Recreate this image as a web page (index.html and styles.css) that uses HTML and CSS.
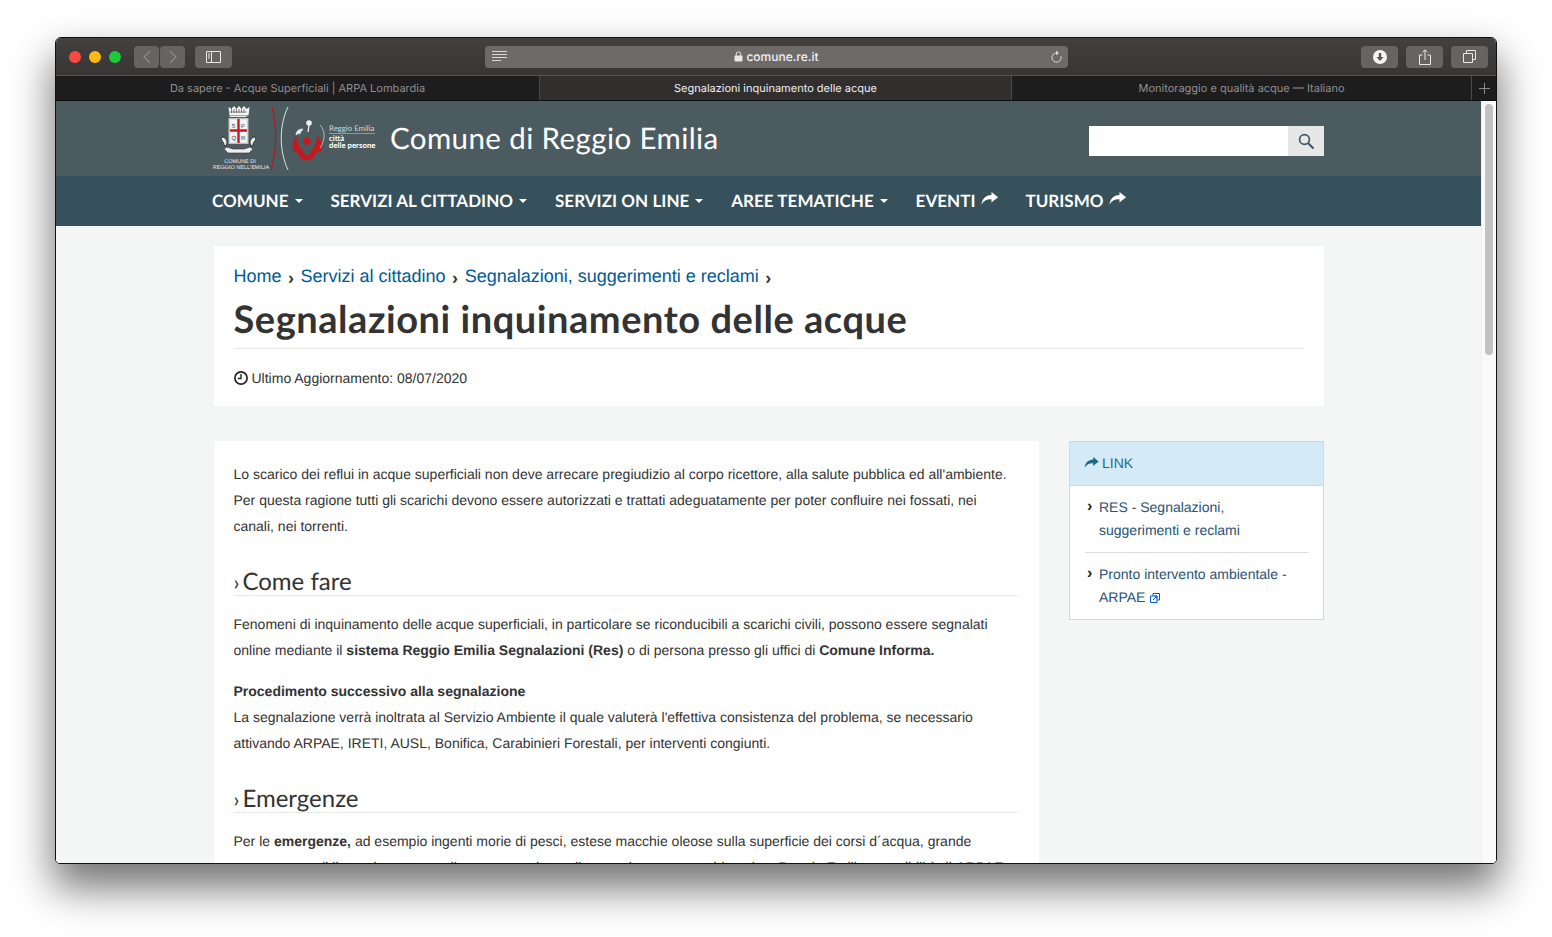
FILE: index.html
```html
<!doctype html>
<html lang="it">
  <head>
    <meta charset="UTF-8" />
    <title>Segnalazioni inquinamento delle acque</title>
    <link rel="stylesheet" href="styles.css">
  </head>
  <body>
    <div class="window">
      <div class="toolbar">
        <div class="lights">
          <span class="light red"></span>
          <span class="light yellow"></span>
          <span class="light green"></span>
        </div>
        <div class="nav-btns">
          <span class="tool-btn arrow-btn">
            <svg width="10" height="14" viewBox="0 0 10 14"><path d="M8 1 2 7l6 6" fill="none" stroke="#8e8e8d" stroke-width="1.2"/></svg>
          </span>
          <span class="tool-btn arrow-btn">
            <svg width="10" height="14" viewBox="0 0 10 14"><path d="M2 1l6 6-6 6" fill="none" stroke="#8e8e8d" stroke-width="1.2"/></svg>
          </span>
        </div>
        <span class="tool-btn wide-btn sidebar-btn">
          <svg width="15" height="12" viewBox="0 0 15 12"><path d="M.5.5h14v11H.5zM5.5.5v11" fill="none" stroke="#e8e8e8"/><path d="M2 3h2M2 5h2M2 7h2" stroke="#e8e8e8"/></svg>
        </span>
        <div class="urlbar">
          <svg class="reader" width="15" height="11" viewBox="0 0 15 11"><path d="M0 .5h15M0 3.5h15M0 6.5h15M0 9.5h9" stroke="#d8d8d8"/></svg>
          <span class="url">
            <svg width="9" height="11" viewBox="0 0 9 11"><path d="M2.2 5V3.2a2.3 2.3 0 0 1 4.6 0V5" fill="none" stroke="#e8e8e8"/><rect x=".5" y="4.6" width="8" height="6" rx="1" fill="#e8e8e8"/></svg>
            comune.re.it
          </span>
          <svg class="reload" width="12" height="14" viewBox="0 0 12 14"><path d="M6.5 3a4.6 4.6 0 1 0 4.4 3.2" fill="none" stroke="#d8d8d8"/><path d="M6 .6 9 3 6 5.2z" fill="#d8d8d8"/></svg>
        </div>
        <div class="actions">
          <span class="tool-btn wide-btn">
            <svg width="14" height="14" viewBox="0 0 14 14"><circle cx="7" cy="7" r="7" fill="#f4f4f4"/><path d="M5.8 3h2.4v4H10.500L7 11 3.500 7h2.300z" fill="#555"/></svg>
          </span>
          <span class="tool-btn wide-btn">
            <svg width="12" height="16" viewBox="0 0 12 16"><path d="M3.500 6H.5v9.500h11V6H8.500M6 11V1M3.500 3.300 6 .8l2.500 2.500" fill="none" stroke="#e8e8e8"/></svg>
          </span>
          <span class="tool-btn wide-btn">
            <svg width="13" height="13" viewBox="0 0 13 13"><path d="M.5 3.500h9v9h-9zM3.500 3.500V.5h9v9h-3" fill="none" stroke="#e8e8e8"/></svg>
          </span>
        </div>
      </div>

      <div class="tabs">
        <div class="tab tab-first">Da sapere - Acque Superficiali | ARPA Lombardia</div>
        <div class="tab tab-active">Segnalazioni inquinamento delle acque</div>
        <div class="tab tab-last">Monitoraggio e qualità acque — Italiano</div>
        <div class="tab-plus">
          <svg width="11" height="11" viewBox="0 0 11 11"><path d="M5.500 0v11M0 5.500h11" stroke="#8b8b8b"/></svg>
        </div>
      </div>

      <div class="viewport">
        <div class="page">
          <header class="site-head">
            <div class="container head-row">
              <svg class="logo" width="165" height="68" viewBox="0 0 165 68">
                <path d="M15.500 2l3 2 2.500-3 2.500 3 2.500-3 2.500 3 2.500-3 2.500 3 3-2-1 8.500H16.500z" fill="#f4f4f4"/>
                <path d="M16.500 7h17M18.500 4v4M21 4v4M23.500 4v4M26 4v4M28.500 4v4M31 4v4" stroke="#555" stroke-width=".7"/>
                <path d="M16.500 11.500h17" stroke="#eee"/>
                <rect x="16" y="13.500" width="19" height="25" fill="#e4e6e6" stroke="#b9bdbe"/>
                <rect x="17.500" y="15" width="16" height="22" fill="#f5f5f5"/>
                <path d="M25.500 14v24M17 25.500h17" stroke="#c41a22" stroke-width="2.400"/>
                <text x="18.500" y="22.500" class="spqr">S</text>
                <text x="28" y="22.500" class="spqr">P</text>
                <text x="18.500" y="34.500" class="spqr">Q</text>
                <text x="28" y="34.500" class="spqr">R</text>
                <path d="M11 40c0-4-4-4-2-8 3 0 5 3 5 6l-1 3zM40 40c0-4 4-4 2-8-3 0-5 3-5 6l1 3z" fill="#eee" stroke="#222" stroke-width=".8"/>
                <path d="M11 44l4 4h21l4-4-3-2-6 2H20l-6-2z" fill="#eee" stroke="#333" stroke-width=".6"/>
                <text x="27" y="57.500" class="crest-txt" text-anchor="middle">COMUNE DI</text>
                <text x="28" y="64" class="crest-txt" text-anchor="middle">REGGIO NELL'EMILIA</text>
                <path d="M59 2c5 20 5 42-1 63" fill="none" stroke="#b3191f" stroke-width="1.200"/>
                <path d="M75 2c-9 18-9 44 0 63" fill="none" stroke="#dfe3e3" stroke-width="1"/>
                <circle cx="94" cy="36" r="3.800" fill="#c21a20"/>
                <path d="M83 33c-3 4-3 9-2 13 3 0 5 2 6 4l3-3c-3-3-6-8-7-14zM105 32c3 4 4 9 2 14-3 0-5 2-6 4l-3-3c3-3 6-9 7-15zM87 48l7 3 7-3-1 5-6 2-6-2z" fill="#c21a20" stroke="#c21a20" stroke-width="1.500"/>
                <circle cx="96" cy="18" r="2.800" fill="#f0f0f0"/>
                <path d="M96 20l-1 7" stroke="#f0f0f0" stroke-width="1.300"/>
                <path d="M83 30c0-4 3-6 7-6-1 2-3 3-3 5-1-1-3 0-4 1z" fill="#f0f0f0" stroke="#f0f0f0" stroke-width=".6"/>
                <path d="M107 20c5 5 6 14 0 23" fill="none" stroke="#d9dddd" stroke-width=".7"/>
                <text x="116" y="25.500" class="logo-small">Reggio Emilia</text>
                <path d="M116 28.500h46" stroke="#aeb6b8" stroke-width=".7"/>
                <text x="116" y="35.500" class="logo-small logo-strong">città</text>
                <text x="116" y="43" class="logo-small logo-strong">delle persone</text>
              </svg>
              <div class="site-title">Comune di Reggio Emilia</div>
              <form class="search">
                <span class="search-input"></span>
                <span class="search-btn">
                  <svg width="17" height="17" viewBox="0 0 17 17"><circle cx="6.500" cy="6.500" r="4.900" fill="none" stroke="#3f5a66" stroke-width="1.700"/><path d="M10.200 10.200 15.500 15.500" stroke="#3f5a66" stroke-width="2.200"/></svg>
                </span>
              </form>
            </div>
          </header>

          <nav class="site-nav">
            <div class="nav-row">
              <a class="nav-item">COMUNE <i class="caret"></i></a>
              <a class="nav-item">SERVIZI AL CITTADINO <i class="caret"></i></a>
              <a class="nav-item">SERVIZI ON LINE <i class="caret"></i></a>
              <a class="nav-item">AREE TEMATICHE <i class="caret"></i></a>
              <a class="nav-item">EVENTI
                <svg class="share" width="17" height="13" viewBox="0 0 17 13"><path d="M10.500 0 17 5.200l-6.500 5.300V7.300C6 7 3 8.500 .5 12.500 1 7 4.500 3.300 10.500 3z" fill="#fff"/></svg>
              </a>
              <a class="nav-item">TURISMO
                <svg class="share" width="17" height="13" viewBox="0 0 17 13"><path d="M10.500 0 17 5.200l-6.500 5.300V7.300C6 7 3 8.500 .5 12.500 1 7 4.500 3.300 10.500 3z" fill="#fff"/></svg>
              </a>
            </div>
          </nav>

          <main class="container content">
            <section class="title-card">
              <div class="crumbs">
                <a>Home</a><span class="sep">›</span>
                <a>Servizi al cittadino</a><span class="sep">›</span>
                <a>Segnalazioni, suggerimenti e reclami</a><span class="sep">›</span>
              </div>
              <h1>Segnalazioni inquinamento delle acque</h1>
              <div class="updated">
                <svg width="14" height="14" viewBox="0 0 14 14"><circle cx="7" cy="7" r="6.100" fill="none" stroke="#222" stroke-width="1.700"/><path d="M7 3v4.500H3.800" fill="none" stroke="#222" stroke-width="1.400"/></svg>
                Ultimo Aggiornamento: 08/07/2020
              </div>
            </section>

            <div class="columns">
              <article class="main-card">
                <p>Lo scarico dei reflui in acque superficiali non deve arrecare pregiudizio al corpo ricettore, alla salute pubblica ed all'ambiente.<br>Per questa ragione tutti gli scarichi devono essere autorizzati e trattati adeguatamente per poter confluire nei fossati, nei canali, nei torrenti.</p>
                <h2>Come fare</h2>
                <p>Fenomeni di inquinamento delle acque superficiali, in particolare se riconducibili a scarichi civili, possono essere segnalati online mediante il <b>sistema Reggio Emilia Segnalazioni (Res)</b> o di persona presso gli uffici di <b>Comune Informa.</b></p>
                <p class="after"><b>Procedimento successivo alla segnalazione</b><br>La segnalazione verrà inoltrata al Servizio Ambiente il quale valuterà l'effettiva consistenza del problema, se necessario attivando ARPAE, IRETI, AUSL, Bonifica, Carabinieri Forestali, per interventi congiunti.</p>
                <h2>Emergenze</h2>
                <p>Per le <b>emergenze,</b> ad esempio ingenti morie di pesci, estese macchie oleose sulla superficie dei corsi d´acqua, grande<br>sversamento di liquami, contattare il numero verde per il pronto intervento ambientale a Reggio Emilia, reperibilità di <b>ARPAE</b></p>
              </article>

              <aside class="side-card">
                <div class="side-head">
                  <svg width="15" height="11" viewBox="0 0 17 13"><path d="M10.500 0 17 5.200l-6.500 5.300V7.300C6 7 3 8.500 .5 12.500 1 7 4.500 3.300 10.500 3z" fill="#1f6a8c"/></svg>
                  <span>LINK</span>
                </div>
                <ul class="side-list">
                  <li><a>RES - Segnalazioni, suggerimenti e reclami</a></li>
                  <li>
                    <a>Pronto intervento ambientale - ARPAE
                      <svg class="ext" width="10" height="10" viewBox="0 0 10 10"><path d="M.5 3h6.500v6.500H.5zM3 3V.5h6.500V7H7M3 7l4-4M4.500 3H7v2.500" fill="none" stroke="#0a58d0"/></svg>
                    </a>
                  </li>
                </ul>
              </aside>
            </div>
          </main>
        </div>
        <div class="scrollbar"><span class="thumb"></span></div>
      </div>
    </div>
  </body>
</html>
```

FILE: styles.css
```css
* {
  box-sizing: border-box;
}

html,
body {
  height: 937px;
  margin: 0;
  overflow: hidden;
}

body {
  background: #fff;
  padding: 37px 55px 0;
  font-family: "Liberation Sans", Arial, sans-serif;
  text-rendering: geometricPrecision;
}

.window {
  height: 827px;
  display: flex;
  flex-direction: column;
  border: 1px solid #111;
  border-radius: 6px 6px 5px 5px;
  overflow: hidden;
  background: #fff;
  box-shadow: 0 22px 42px 2px rgba(0, 0, 0, 0.55);
}

/* browser chrome */
.toolbar {
  height: 38px;
  flex: none;
  display: flex;
  align-items: center;
  padding: 0 8px 0 13px;
  background: linear-gradient(#43413f, #383635);
  border-bottom: 1px solid #555;
}

.lights {
  display: flex;
  gap: 8px;
  margin-right: 13px;
}

.light {
  width: 12px;
  height: 12px;
  border-radius: 50%;
}

.red {
  background: #fc4a42;
}

.yellow {
  background: #fdbb0d;
}

.green {
  background: #1fc839;
}

.tool-btn {
  height: 22px;
  display: flex;
  align-items: center;
  justify-content: center;
  background: #656463;
  border-radius: 4px;
}

.nav-btns {
  display: flex;
  gap: 1px;
  margin-right: 10px;
}

.arrow-btn {
  width: 25px;
}

.wide-btn {
  width: 37px;
}

.sidebar-btn {
  margin-right: 253px;
}

.urlbar {
  width: 583px;
  height: 22px;
  display: flex;
  align-items: center;
  justify-content: space-between;
  padding: 0 6px 0 7px;
  border-radius: 4px;
  background: #6c6b6a;
  color: #f2f2f2;
}

.url {
  font-family: Inter, sans-serif;
  font-size: 12px;
  font-weight: 500;
  display: flex;
  align-items: center;
  gap: 3px;
  margin-right: 4px;
}

.actions {
  display: flex;
  gap: 8px;
  margin-left: auto;
}

.tabs {
  height: 25px;
  flex: none;
  display: flex;
  background: #1e1d1d;
  border-bottom: 1px solid #0c0c0c;
  font-family: Inter, sans-serif;
  font-size: 11px;
  color: #8f8f8f;
}

.tab {
  display: flex;
  align-items: center;
  justify-content: center;
  border-right: 1px solid #4a4a4a;
}

.tab-first {
  width: 484px;
}

.tab-active {
  width: 472px;
  background: #302f2e;
  color: #f0f0f0;
}

.tab-last {
  width: 460px;
}

.tab-plus {
  flex: 1;
  display: flex;
  align-items: center;
  justify-content: center;
}

.viewport {
  flex: 1;
  min-height: 0;
  display: flex;
}

.scrollbar {
  width: 15px;
  flex: none;
  background: #fafafa;
  border-left: 1px solid #eee;
  padding: 3px 3px 0 3px;
}

.thumb {
  display: block;
  width: 8px;
  height: 251px;
  border-radius: 4px;
  background: #c2c2c2;
}

/* site */
.page {
  flex: 1;
  min-width: 0;
  overflow: hidden;
  background: #f4f6f5;
  color: #333;
  font-size: 14px;
}

.container {
  width: 1110px;
  margin-left: 158px;
}

.site-head {
  height: 75px;
  background: #4c5b60;
}

.head-row {
  height: 75px;
  display: flex;
  align-items: flex-start;
}

.logo {
  margin: 4px 0 0 -1px;
  flex: none;
}

.spqr {
  font-family: "Liberation Sans", sans-serif;
  font-size: 6px;
  fill: #333;
}

.crest-txt {
  font-family: "Liberation Sans", sans-serif;
  font-size: 5.500px;
  fill: #e8eaea;
}

.logo-small {
  font-family: Lato, sans-serif;
  font-size: 7.800px;
  fill: #d4d9da;
}

.logo-strong {
  fill: #fff;
  font-weight: 700;
}

.site-title {
  margin: 20px 0 0 12px;
  font-family: Lato, sans-serif;
  font-size: 29.500px;
  letter-spacing: 0.4px;
  line-height: 36px;
  color: #fff;
  white-space: nowrap;
}

.search {
  margin: 25px 0 0 auto;
  display: flex;
}

.search-input {
  width: 199px;
  height: 30px;
  background: #fff;
}

.search-btn {
  width: 36px;
  height: 30px;
  display: flex;
  align-items: center;
  justify-content: center;
  background: #e6e8e8;
}

.site-nav {
  height: 50px;
  background: #36505c;
}

.nav-row {
  height: 50px;
  display: flex;
  align-items: center;
  gap: 27.800px;
  margin-left: 156px;
  padding-bottom: 2px;
}

.nav-item {
  font-family: Lato, sans-serif;
  font-size: 17px;
  font-weight: 700;
  letter-spacing: 0.05px;
  color: #fff;
  white-space: nowrap;
  display: flex;
  align-items: center;
  gap: 6px;
}

.caret {
  width: 0;
  height: 0;
  margin-top: 2px;
  border-top: 4px solid #fff;
  border-left: 4px solid transparent;
  border-right: 4px solid transparent;
}

.share {
  margin: -4px 0 0 -1px;
}

.content {
  padding-top: 20px;
}

.title-card {
  height: 160px;
  background: #fff;
  padding: 18px 20px 0 19.500px;
}

.crumbs {
  font-size: 18px;
  line-height: 24px;
  color: #333;
}

.crumbs a {
  color: #005a96;
}

.sep {
  position: relative;
  top: 2px;
  margin: 0 1.500px 0 6.500px;
  font-weight: 700;
}

h1 {
  margin: 4px 0 0;
  height: 57px;
  border-bottom: 1px solid #e8e8e8;
  font-family: Lato, sans-serif;
  font-size: 38px;
  letter-spacing: 0.55px;
  line-height: 55px;
  font-weight: 700;
  color: #333;
  white-space: nowrap;
}

.updated {
  margin-top: 19px;
  line-height: 20px;
  display: flex;
  align-items: center;
  gap: 4px;
}

.columns {
  display: flex;
  align-items: flex-start;
  gap: 30px;
  margin-top: 35px;
}

.main-card {
  width: 825px;
  flex: none;
  background: #fff;
  padding: 20px 20px 40px 19.500px;
}

.main-card p {
  margin: 0;
  line-height: 26px;
}

.main-card .after {
  margin-top: 15px;
}

h2 {
  margin: 32px 0 15px;
  height: 25px;
  border-bottom: 1px solid #e8e8e8;
  font-family: Lato, sans-serif;
  font-size: 24px;
  line-height: 21px;
  font-weight: 400;
  color: #333;
}

h2::before {
  content: "›";
  font-size: 21px;
  margin-right: 3px;
}

.side-card {
  width: 255px;
  flex: none;
  background: #fff;
  border: 1px solid #b9e2ee;
}

.side-head {
  height: 44px;
  display: flex;
  align-items: center;
  gap: 3px;
  padding: 0 0 2px 14px;
  background: #d4ebf7;
  border-bottom: 1px solid #b9e2ee;
  color: #1f6a8c;
}

.side-list {
  list-style: none;
  margin: 0;
  padding: 10px 15px 10px;
}

.side-list li {
  position: relative;
  padding-left: 14px;
  line-height: 23px;
  color: #2a5273;
}

.side-list li::before {
  content: "›";
  position: absolute;
  left: 2px;
  top: -1px;
  font-weight: 700;
  font-size: 16px;
  color: #222;
}

.side-list li + li {
  margin-top: 10px;
  padding-top: 10px;
  border-top: 1px solid #ddd;
}

.side-list li + li::before {
  top: 9px;
}

.ext {
  margin-left: 1px;
  vertical-align: -1px;
}
```
